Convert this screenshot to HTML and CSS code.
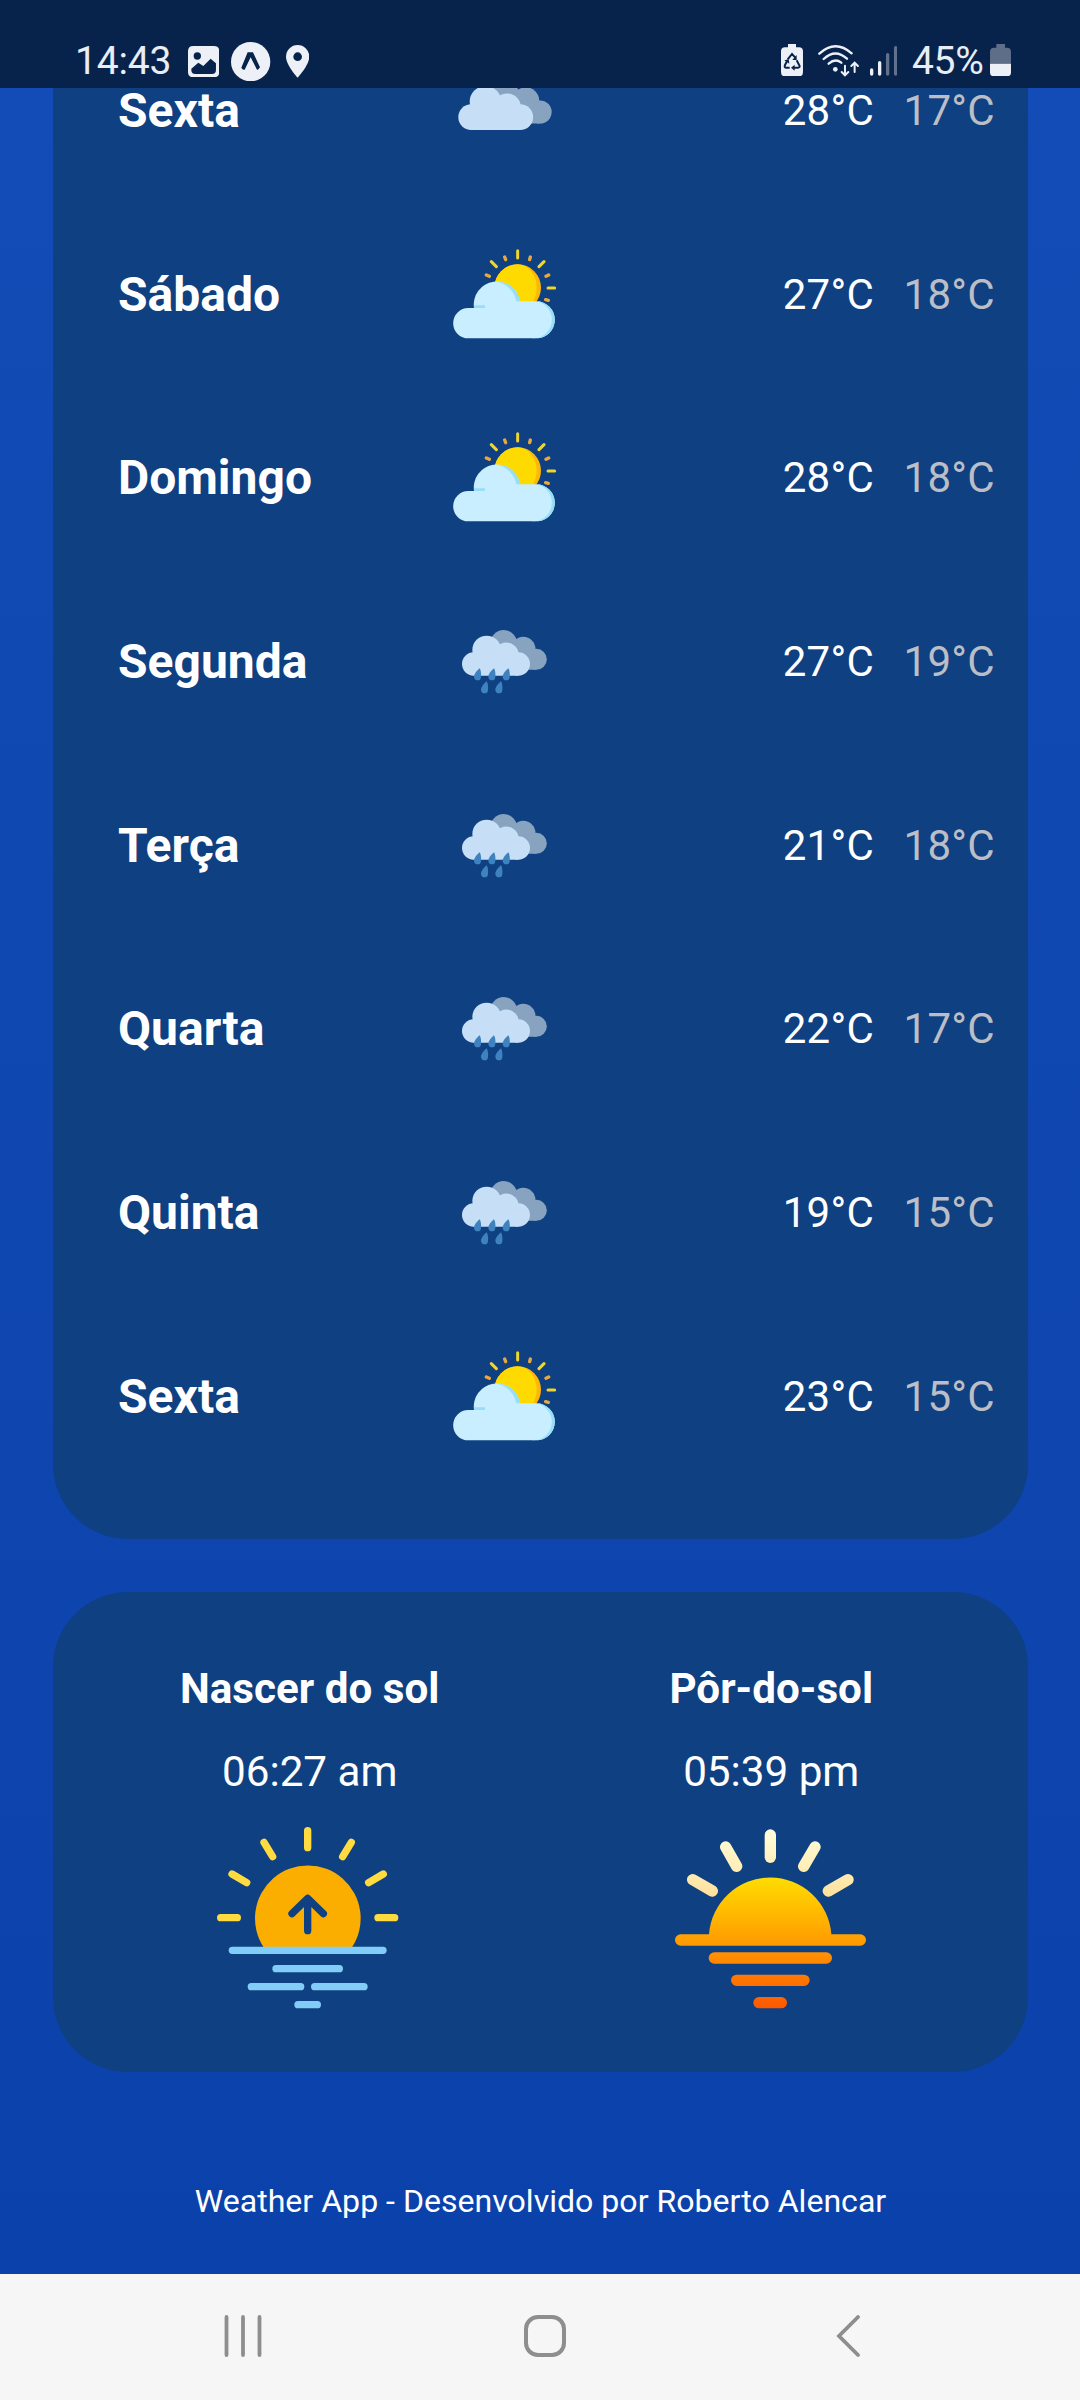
FILE: index.html
```html
<!DOCTYPE html>
<html lang="pt-BR">
<head>
<meta charset="utf-8">
<title>Weather App</title>
<link rel="stylesheet" href="styles.css">
</head>
<body>
<svg class="defs" aria-hidden="true">
  <symbol id="partly" viewBox="42 461 360 360">
    <circle cx="263" cy="622" r="70" fill="#fdb70a"/>
    <path d="M263 552a70 70 0 0 0 0 140a57 70 0 0 0 0-140z" fill="#ffda00"/>
    <g stroke="#efd52f" stroke-width="9" stroke-linecap="round"><path d="M263 511v22M184 544l15 15M342 544l-15 15M354 623h20"/></g>
    <g stroke="#eaa83a" stroke-width="10" stroke-linecap="round"><path d="M224 530l3 8M301 530l-2 8M169 584l9 4M356 584l-8 4M347 658l8 2"/></g>
    <path d="M115 774a45.500 45.500 0 0 1 0-91h17a68 68 0 1 1 137-20h50a55 55 0 0 1 0 111z" fill="#c8eeff"/>
    <path d="M202 604a68 68 0 0 1 68 59h-11a74 74 0 0 0-57-59zM319 663a55 55 0 0 1 0 111h-14a56 56 0 0 0 14-111zM132 675h33v8h-33z" fill="#97dff9"/>
  </symbol>
  <g id="clouds">
    <g fill="#87a3c0"><circle cx="221" cy="130" r="40"/><circle cx="280" cy="147" r="36.500"/><circle cx="319" cy="178" r="31.500"/><path d="M221 147h98v62.500h-98z"/></g>
    <g fill="#c6dff7"><circle cx="131" cy="192" r="35"/><circle cx="170" cy="150" r="43"/><circle cx="229" cy="165" r="37.500"/><circle cx="265" cy="192" r="35"/><path d="M131 165h134v62H131z"/></g>
  </g>
  <symbol id="cloudy" viewBox="42 -90 360 360">
    <use href="#clouds" transform="translate(-20.600 -99.700) scale(1.100)"/>
  </symbol>
  <symbol id="rain" viewBox="42 3 360 360">
    <use href="#clouds"/>
    <g fill="#3e82c0">
      <path id="drop" d="M149 205c-7 5-17 17-17 25 0 7 5 11 11 11 7 0 10-4 10-11 1-8 0-19-4-25z"/>
      <use href="#drop" x="43"/><use href="#drop" x="86"/><use href="#drop" x="21" y="39"/><use href="#drop" x="64" y="39"/>
    </g>
  </symbol>
</svg>

<header class="status">
  <div class="status-left">
    <span class="clock">14:43</span>
    <svg class="ic-image" viewBox="0 0 94 94" width="31.300" height="31.300"><path fill="#edf0f6" fill-rule="evenodd" d="M16 0H78Q94 0 94 16V78Q94 94 78 94H16Q0 94 0 78V16Q0 0 16 0zM28 19a11 11 0 1 0 0 22a11 11 0 0 0 0-22zM10 71Q10 84 22 84H72Q84 84 84 71V52L68 38L46 60L31 50L10 68z"/></svg>
    <svg class="ic-expo" viewBox="0 0 118 118" width="39.300" height="39.300"><circle cx="59" cy="59" r="59" fill="#edf0f6"/><path d="M50 31h16L87 76q-5 9-9 7L59 46L41 83q-6 2-10-6z" fill="#08234b"/></svg>
    <svg class="ic-pin" viewBox="0 0 70 98" width="23.300" height="32.700"><path fill="#edf0f6" fill-rule="evenodd" d="M35 0a35 35 0 0 1 35 35C70 60 35 98 35 98S0 60 0 35A35 35 0 0 1 35 0zM35 22a13 13 0 1 0 0 26a13 13 0 0 0 0-26z"/></svg>
  </div>
  <div class="status-right">
    <svg class="ic-saver" viewBox="0 0 66 97" width="22" height="32.300"><path d="M21 0h24v10h9q12 0 12 12v63q0 12-12 12H12Q0 97 0 85V22Q0 10 12 10h9z" fill="#edf0f6"/><g fill="none" stroke="#08234b" stroke-width="6"><path d="M20 46L33 30L43 41M47 49L56 66Q57 71 49 71H37M26 71H15Q9 70 12 63L18 52"/></g><path d="M47 33v15H34zM41 62v18L30 71zM10 49l13-3 2 13z" fill="#08234b"/></svg>
    <svg class="ic-wifi" viewBox="0 0 124 95" width="41.300" height="31.700"><g fill="none" stroke="#edf0f6" stroke-width="7" stroke-linecap="round"><path d="M4 26Q52-18 101 25M17 42Q52 9 87 41M32 56Q52 39 70 53"/><g stroke-width="6"><path d="M81 62v28M71 81l10 10 10-10M110 81V53M100 63l10-10 10 10"/></g></g><circle cx="52" cy="73" r="7" fill="#edf0f6"/></svg>
    <svg class="ic-signal" viewBox="0 0 82 90" width="27.300" height="30"><g stroke-width="10" stroke-linecap="round"><path d="M5 72v12M29 50v34" stroke="#edf0f6"/><path d="M53 26v58M77 5v79" stroke="#62718b"/></g></svg>
    <span class="percent">45%</span>
    <svg class="ic-battery" viewBox="0 0 63 97" width="21" height="32.300"><path d="M19 0h26v11h6q12 0 12 12v36H0V23q0-12 12-12h7z" fill="#5e6d88"/><path d="M0 59h63v27q0 11-12 11H12Q0 97 0 86z" fill="#edf0f6"/></svg>
  </div>
</header>

<main class="screen">
  <section class="card forecast">
    <div class="row"><b>Sexta</b><svg class="icon"><use href="#cloudy"/></svg><p><span>28°C</span><span class="min">17°C</span></p></div>
    <div class="row"><b>Sábado</b><svg class="icon"><use href="#partly"/></svg><p><span>27°C</span><span class="min">18°C</span></p></div>
    <div class="row"><b>Domingo</b><svg class="icon"><use href="#partly"/></svg><p><span>28°C</span><span class="min">18°C</span></p></div>
    <div class="row"><b>Segunda</b><svg class="icon"><use href="#rain"/></svg><p><span>27°C</span><span class="min">19°C</span></p></div>
    <div class="row"><b>Terça</b><svg class="icon"><use href="#rain"/></svg><p><span>21°C</span><span class="min">18°C</span></p></div>
    <div class="row"><b>Quarta</b><svg class="icon"><use href="#rain"/></svg><p><span>22°C</span><span class="min">17°C</span></p></div>
    <div class="row"><b>Quinta</b><svg class="icon"><use href="#rain"/></svg><p><span>19°C</span><span class="min">15°C</span></p></div>
    <div class="row"><b>Sexta</b><svg class="icon"><use href="#partly"/></svg><p><span>23°C</span><span class="min">15°C</span></p></div>
  </section>

  <section class="card sun">
    <div class="sun-col">
      <b>Nascer do sol</b>
      <span>06:27 am</span>
      <svg class="sun-icon" viewBox="180 530 600 600">
        <path d="M341 921a158.500 158.500 0 1 1 265 0z" fill="#fbae00"/>
        <path d="M473 871V776M426 820l47-46 47 46" fill="none" stroke="#0f4081" stroke-width="22" stroke-linecap="round" stroke-linejoin="round"/>
        <path d="M473 571v51M342 606l26 43M604 606l-26 43M246 701l44 26M700 701l-44 26M212 832h50M684 832h50" stroke="#ffdb40" stroke-width="22" stroke-linecap="round"/>
        <path d="M247 930h452M378 985h190M304 1039h148M494 1039h148M444 1093h58" stroke="#82cdf7" stroke-width="22" stroke-linecap="round"/>
      </svg>
    </div>
    <div class="sun-col">
      <b>Pôr-do-sol</b>
      <span>05:39 pm</span>
      <svg class="sun-icon" viewBox="93 530 600 600">
        <defs>
          <linearGradient id="sunset" gradientUnits="userSpaceOnUse" x1="0" y1="714" x2="0" y2="1104"><stop offset="0" stop-color="#ffdc00"/><stop offset=".5" stop-color="#ff9b00"/><stop offset="1" stop-color="#ff5800"/></linearGradient>
          <linearGradient id="rays" gradientUnits="userSpaceOnUse" x1="0" y1="567" x2="0" y2="768"><stop offset="0" stop-color="#ffffdd"/><stop offset="1" stop-color="#ffe19c"/></linearGradient>
        </defs>
        <path d="M374 584a17 17 0 0 1 34 0v67a17 17 0 0 1-34 0z" fill="url(#rays)"/>
        <path d="M257 620l33 58M525 620l-34 58M158 718l59 34M624 718l-59 34" stroke="url(#rays)" stroke-width="34" stroke-linecap="round"/>
        <path d="M122 882h85a184 184 0 0 1 367 0h87a17 17 0 0 1 0 34H122a17 17 0 0 1 0-34zM223 936h336a17 17 0 0 1 0 34H223a17 17 0 0 1 0-34zM290 1003h202a17 17 0 0 1 0 34H290a17 17 0 0 1 0-34zM357 1070h67a17 17 0 0 1 0 34h-67a17 17 0 0 1 0-34z" fill="url(#sunset)"/>
      </svg>
    </div>
  </section>

  <footer class="credit">Weather App - Desenvolvido por Roberto Alencar</footer>
</main>

<nav class="navbar">
  <svg width="40" height="44" viewBox="0 0 40 44"><path d="M3.500 2v38M20 2v38M36.500 2v38" stroke="#8e8e8e" stroke-width="3.800" stroke-linecap="round"/></svg>
  <svg class="home" width="44" height="44" viewBox="0 0 44 44"><rect x="3" y="2" width="38" height="38" rx="12" fill="none" stroke="#8e8e8e" stroke-width="4"/></svg>
  <svg width="26" height="44" viewBox="0 0 26 44"><path d="M23 2L4 21l19 19" fill="none" stroke="#8e8e8e" stroke-width="3.800" stroke-linecap="round"/></svg>
</nav>
</body>
</html>
```
FILE: styles.css
```css
* { box-sizing: border-box; margin: 0; padding: 0; }

body {
  width: 1080px;
  height: 2400px;
  display: flex;
  flex-direction: column;
  overflow: hidden;
  font-family: Roboto, sans-serif;
  color: #fff;
}

svg { display: block; flex: none; }
.defs { width: 0; height: 0; position: absolute; }

.status {
  flex: none;
  height: 88px;
  padding: 42px 69px 0 75px;
  display: flex;
  justify-content: space-between;
  background: #08234b;
  color: #e9edf5;
  font-size: 39px;
  line-height: 39px;
}
.status-left, .status-right { display: flex; height: 39px; }
.clock { width: 113px; letter-spacing: -0.200px; }
.ic-image { margin-top: 4px; }
.ic-expo { margin-left: 12px; }
.ic-pin { margin: 3px 0 0 15.500px; }
.ic-saver { margin-top: 2px; }
.ic-wifi { margin: 3px 0 0 15px; }
.ic-signal { margin: 4px 0 0 10px; }
.percent { width: 78px; margin-left: 15px; letter-spacing: -0.300px; }
.ic-battery { margin-top: 2px; }

.screen {
  height: 2186px;
  flex: none;
  overflow: hidden;
  padding: 0 52px 0 53px;
  background: linear-gradient(#134cb6, #0b41aa);
}

.card { background: #0f4081; border-radius: 75px; }

.forecast { margin-top: -70px; padding: 0 33px 51px 65px; }
.row {
  height: 183.700px;
  display: grid;
  grid-template-columns: 326px 120px 1fr;
  align-items: center;
}
.row b { padding-top: 2px; font-size: 48px; line-height: 56px; }
.icon { width: 120px; height: 120px; }
.row p { padding-top: 2px; display: flex; justify-content: flex-end; gap: 29.500px; font-size: 42px; line-height: 50px; letter-spacing: 0.300px; }
.min { color: #bbbec6; }

.sun {
  margin-top: 53px;
  height: 480px;
  padding: 72px 26px 0;
  display: grid;
  grid-template-columns: 1fr 1fr;
}
.sun-col { display: flex; flex-direction: column; align-items: center; font-size: 42.200px; line-height: 50px; }
.sun-col span { margin-top: 33px; }
.sun-icon { width: 200px; height: 200px; margin-top: 20px; }

.credit { margin-top: 110px; text-align: center; font-size: 32.100px; line-height: 38px; }

.navbar {
  flex: none;
  height: 126px;
  padding: 0 219px 0 223px;
  display: flex;
  justify-content: space-between;
  align-items: center;
  background: #f6f6f6;
}
.home { margin-right: 8px; }
```
